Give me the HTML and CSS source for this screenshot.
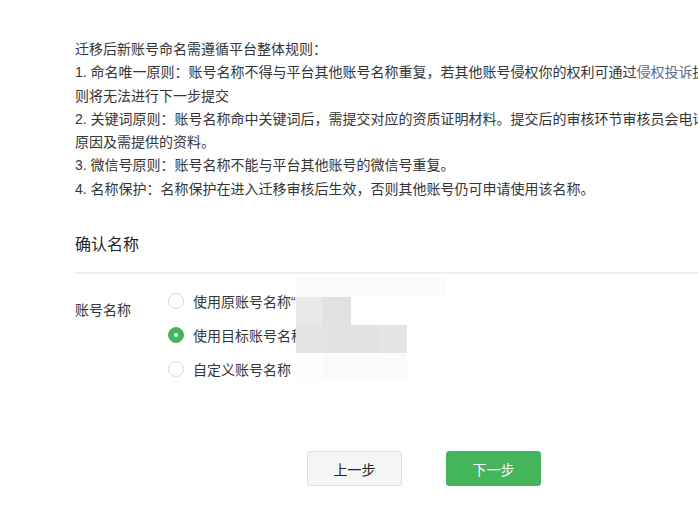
FILE: index.html
```html
<!DOCTYPE html>
<html lang="zh-CN">
<head>
<meta charset="utf-8">
<title>确认名称</title>
<link rel="stylesheet" href="styles.css">
</head>
<body>
<div class="page">
  <div class="rules">
    <p>迁移后新账号命名需遵循平台整体规则：</p>
    <p>1. 命名唯一原则：账号名称不得与平台其他账号名称重复，若其他账号侵权你的权利可通过<a class="link" href="#">侵权投诉</a>提交投诉，否则将无法进行下一步提交</p>
    <p>2. 关键词原则：账号名称命中关键词后，需提交对应的资质证明材料。提交后的审核环节审核员会电话联系你告知原因及需提供的资料。</p>
    <p>3. 微信号原则：账号名称不能与平台其他账号的微信号重复。</p>
    <p>4. 名称保护：名称保护在进入迁移审核后生效，否则其他账号仍可申请使用该名称。</p>
  </div>

  <h2 class="section-title">确认名称</h2>

  <div class="form-row">
    <div class="form-label">账号名称</div>
    <div class="radio-group">
      <label class="radio"><span class="radio-icon"></span>使用原账号名称“某某”</label>
      <label class="radio"><span class="radio-icon is-checked"></span>使用目标账号名称“某某某”</label>
      <label class="radio"><span class="radio-icon"></span>自定义账号名称</label>
      <div class="mosaic">
        <div class="mosaic-row row-a"><span class="cell c-a1"></span></div>
        <div class="mosaic-row row-b"><span class="cell c-b1"></span><span class="cell c-b2"></span></div>
        <div class="mosaic-row row-c"><span class="cell c-c1"></span><span class="cell c-c2"></span><span class="cell c-c3"></span><span class="cell c-c4"></span></div>
        <div class="mosaic-row row-d"><span class="cell c-d1"></span><span class="cell c-d2"></span><span class="cell c-d3"></span><span class="cell c-d4"></span></div>
      </div>
    </div>
  </div>

  <div class="actions">
    <button class="btn btn-default" type="button">上一步</button>
    <button class="btn btn-primary" type="button">下一步</button>
  </div>
</div>
</body>
</html>
```

FILE: styles.css
```css
html, body {
  margin: 0;
  padding: 0;
  overflow: hidden;
  background: #ffffff;
}

body {
  font-family: "Liberation Sans", "Noto Sans CJK SC", sans-serif;
  font-size: 14px;
  color: #353535;
}

.page {
  width: 705px;
  padding: 38px 0 0 75px;
}

.rules p {
  margin: 0;
  line-height: 23.3px;
}

.link {
  color: #576b95;
  text-decoration: none;
}

.section-title {
  margin: 32px 0 0;
  font-size: 16px;
  font-weight: normal;
  line-height: 24px;
  color: #222222;
  padding-bottom: 15px;
  border-bottom: 2px solid #eeeeee;
}

.form-row {
  display: flex;
  margin-top: 10px;
}

.form-label {
  width: 93px;
  flex: none;
  padding-top: 16px;
  line-height: 20px;
}

.radio-group {
  position: relative;
  display: flex;
  flex-direction: column;
}

.radio {
  display: flex;
  align-items: center;
  height: 34px;
  white-space: nowrap;
}

.radio-icon {
  width: 14px;
  height: 14px;
  border: 1px solid #d9d9d9;
  border-radius: 50%;
  background: #ffffff;
  margin-right: 9px;
  flex: none;
  box-sizing: content-box;
  position: relative;
}

.radio-icon.is-checked {
  background: #44b55a;
  border-color: #44b55a;
}

.radio-icon.is-checked::after {
  content: "";
  position: absolute;
  left: 5px;
  top: 5px;
  width: 4px;
  height: 4px;
  border-radius: 50%;
  background: #ffffff;
}

/* mosaic mask over the account names */
.mosaic {
  position: absolute;
  left: 128px;
  top: -7px;
  display: flex;
  flex-direction: column;
}

.mosaic-row {
  display: flex;
}

.row-a { height: 20px; }
.row-b { height: 28px; }
.row-c { height: 28px; }
.row-d { height: 27px; }

.cell {
  display: block;
  height: 100%;
  width: 28px;
}

.c-a1 { width: 149px; background: #fafafa; }
.c-b1 { width: 27px; background: #e8e8e8; }
.c-b2 { background: #e1e1e1; }
.c-c1 { width: 27px; background: #e4e4e4; }
.c-c2 { background: #e2e2e2; }
.c-c3 { background: #e1e2e2; }
.c-c4 { background: #e5e5e5; }
.c-d1 { width: 27px; background: #fdfdfd; }
.c-d2 { background: #fafafa; }
.c-d3 { background: #fbfbfb; }
.c-d4 { background: #fbfbfb; }

.actions {
  display: flex;
  justify-content: center;
  gap: 44px;
  margin-top: 65px;
  padding-right: 7px;
}

.btn {
  width: 95px;
  height: 35px;
  border-radius: 3px;
  font-family: inherit;
  font-size: 14px;
  cursor: pointer;
  padding: 0;
}

.btn-default {
  background: #f4f5f7;
  border: 1px solid #dcdde0;
  color: #222222;
}

.btn-primary {
  background: #44b55a;
  border: 1px solid #44b55a;
  color: #ffffff;
}
```
